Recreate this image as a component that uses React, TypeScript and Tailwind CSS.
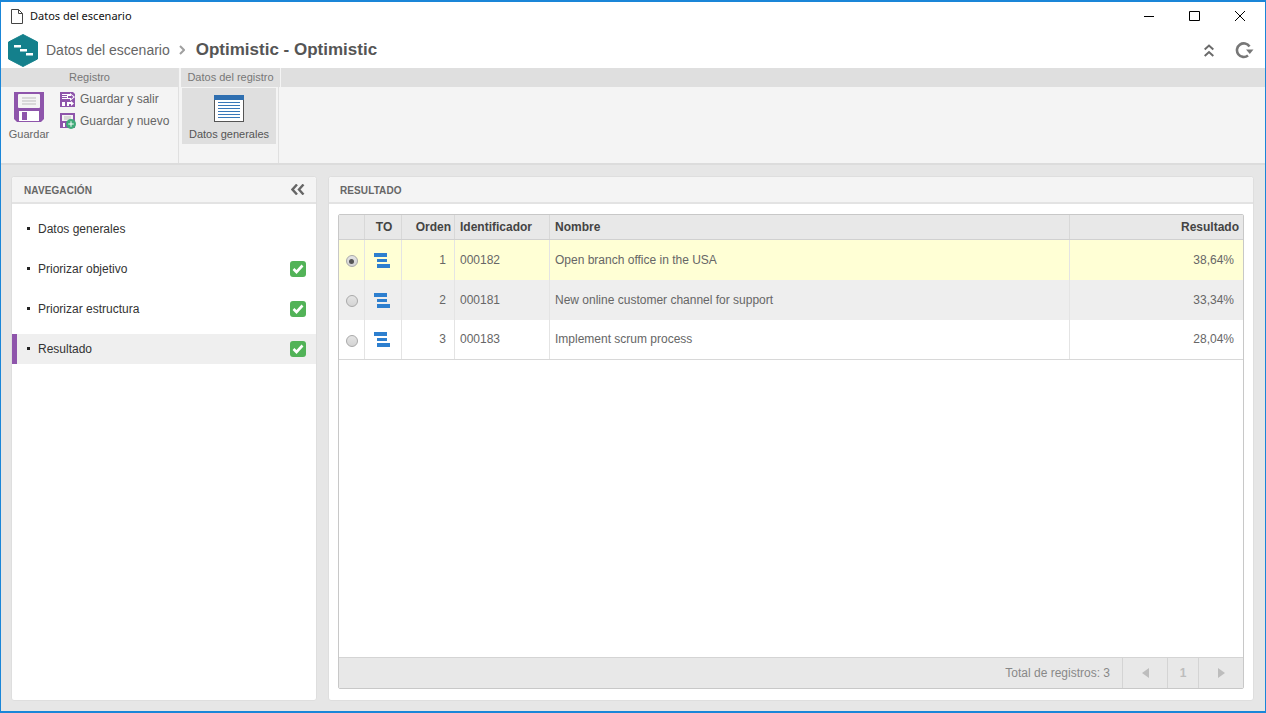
import { Plus } from "lucide-react";

const font = "font-['Liberation_Sans',sans-serif]";

const navItems = [
  { label: "Datos generales", done: false, active: false },
  { label: "Priorizar objetivo", done: true, active: false },
  { label: "Priorizar estructura", done: true, active: false },
  { label: "Resultado", done: true, active: true },
];

const rows = [
  { order: 1, id: "000182", name: "Open branch office in the USA", result: "38,64%", bg: "bg-[#ffffd5]", h: "h-[40px]", selected: true },
  { order: 2, id: "000181", name: "New online customer channel for support", result: "33,34%", bg: "bg-[#eeeeee]", h: "h-[40px]", selected: false },
  { order: 3, id: "000183", name: "Implement scrum process", result: "28,04%", bg: "bg-white", h: "h-[39px]", selected: false },
];

function Floppy({ size }: { size: number }) {
  return (
    <svg width={size} height={size} viewBox="0 0 30 30">
      <path d="M0 0h30v27l-3 3H3l-3-3z" fill="#8e55ab" />
      <rect x="4" y="2" width="22" height="14" rx="1" fill="#f4f4f4" />
      <path d="M8 6h14M8 9h14M8 12h14" stroke="#bdbdbd" strokeWidth="1" />
      <rect x="5" y="19" width="20" height="10" fill="#fff" />
      <rect x="8" y="20" width="5" height="8" fill="#8e55ab" />
    </svg>
  );
}

function SaveExit() {
  return (
    <svg width="15" height="15" viewBox="0 0 15 15">
      <path d="M0 0h13l2 2v13H0z" fill="#8e55ab" />
      <path d="M2 2h8v1H2zM2 4h6v1H2zM2 6h5v1H2z" fill="#fff" />
      <path d="M7 3h3V1l5 4-5 4V7H7z" fill="#fff" />
      <path d="M8 4h3V3l2.500 2-2.500 2V6H8z" fill="#8e55ab" />
      <path d="M2 10h3v4H2zM7 10h4v-1l3 2.500-3 2.500v-2H9v2H7z" fill="#fff" />
    </svg>
  );
}

function SaveNew() {
  return (
    <div className="relative w-[16px] h-[16px]">
      <svg width="15" height="15" viewBox="0 0 15 15">
        <path d="M0 0h15v15H0z" fill="#8e55ab" />
        <path d="M2 2h11v6H2z" fill="#f4f4f4" />
        <path d="M4 4h7M4 6h7" stroke="#bbb" strokeWidth="1" />
        <path d="M3 10h2v4H3z" fill="#fff" />
      </svg>
      <span className="absolute left-[6px] top-[6px] w-[10px] h-[10px] rounded-full bg-[#3faa78] flex items-center justify-center">
        <Plus size={8} strokeWidth={3} className="text-white" />
      </span>
    </div>
  );
}

function TreeIcon() {
  return (
    <div className="flex flex-col gap-[2px] w-[16px] -ml-[2px]">
      <div className="h-[4px] w-[13px] bg-[#2d7fcf]" />
      <div className="h-[3px] w-[10px] ml-[3px] bg-[#2d7fcf]" />
      <div className="h-[4px] w-[13px] ml-[3px] bg-[#2d7fcf]" />
    </div>
  );
}

function Radio({ on }: { on: boolean }) {
  return (
    <span className="w-[12px] h-[12px] rounded-full border border-[#a9a9a9] bg-gradient-to-b from-[#e4e4e4] to-[#d4d4d4] flex items-center justify-center">
      {on && <span className="w-[5px] h-[5px] rounded-full bg-[#555555]" />}
    </span>
  );
}

function Check() {
  return (
    <span className="ml-auto w-[16px] h-[16px] rounded-[3px] bg-[#52b358] flex items-center justify-center">
      <svg width="12" height="10" viewBox="0 0 12 10">
        <path d="M1.500 5l3 3 6-6.500" fill="none" stroke="#fff" strokeWidth="2.600" />
      </svg>
    </span>
  );
}

function PanelHeader({ title, pad, children }: { title: string; pad: string; children?: React.ReactNode }) {
  return (
    <div className={`h-[27px] shrink-0 bg-[#f4f4f4] border-b-2 border-[#e3e3e3] flex items-center justify-between ${pad} pr-[12px] pt-[2px] rounded-t-[3px]`}>
      <span className="text-[10px] font-bold text-[#666666] tracking-[0.1px]">{title}</span>
      {children}
    </div>
  );
}

export default function App() {
  return (
    <div className={`${font} w-[1266px] h-[713px] overflow-hidden flex flex-col bg-[#e6e6e6] border border-t-2 border-b-2 border-[#1a86d8] text-[12px]`}>
      {/* Title bar */}
      <div className="h-[28px] shrink-0 bg-white flex items-center pl-[10px]">
        <svg width="12" height="15" viewBox="0 0 12 15" fill="none" stroke="#444" strokeWidth="1">
          <path d="M.5.5h7l4 4v10H.5zM7.500.5v4h4" />
        </svg>
        <span className="ml-[7px] text-[11px] text-[#111111] font-['Noto_Sans','Liberation_Sans',sans-serif]">Datos del escenario</span>
        <svg className="ml-auto mr-[2px]" width="103" height="12" viewBox="0 0 103 12" fill="none" stroke="#000" strokeWidth="1">
          <path d="M0 6.500h10M45.500 1.500h10v9h-10zM91 1l10 10M101 1 91 11" />
        </svg>
        <div className="w-[16px]" />
      </div>

      {/* Header */}
      <div className="h-[38px] shrink-0 bg-white flex items-center pl-[7px] pr-[11px] pt-[2px]">
        <svg width="30" height="33" viewBox="0 0 30 33">
          <path d="M15 0.500 29.500 8v17L15 32.500.5 25V8z" fill="#14808c" stroke="#14808c" strokeLinejoin="round" />
          <path d="M6 11h7v2.500H6zM12 15h7v2.500h-7zM18 19h7v2.500h-7z" fill="#fff" />
        </svg>
        <span className="ml-[8px] text-[14px] text-[#666666]">Datos del escenario</span>
        <svg className="ml-[9px]" width="6" height="10" viewBox="0 0 6 10" fill="none" stroke="#a0a0a0" strokeWidth="2">
          <path d="M1 1l4 4-4 4" />
        </svg>
        <span className="ml-[11px] text-[17px] font-bold text-[#555555]">Optimistic - Optimistic</span>
        <svg className="ml-auto" width="10" height="13" viewBox="0 0 10 13" fill="none" stroke="#6a6a6a" strokeWidth="2">
          <path d="M.7 5.500 5 1.500l4.300 4M.7 12 5 8l4.300 4" />
        </svg>
        <svg className="ml-[20px]" width="20" height="17" viewBox="0 0 20 17" fill="none">
          <path d="M15.500 4.500A6.800 6.800 0 1 0 14 13.500" stroke="#777777" strokeWidth="2.600" />
          <path d="M12 7.500h7.500L15.800 12z" fill="#777777" />
        </svg>
      </div>

      {/* Ribbon */}
      <div className="h-[97px] shrink-0 flex bg-[#f4f4f4] border-b-2 border-[#dcdcdc]">
        <div className="w-[178px] flex flex-col border-r border-[#e0e0e0]">
          <div className="h-[19px] bg-[#dfdfdf] text-[11px] text-[#777777] flex items-center justify-center">Registro</div>
          <div className="flex pt-[5px] pl-[5px]">
            <div className="w-[46px] flex flex-col items-center text-[11px] text-[#666666]">
              <Floppy size={30} />
              <span className="mt-[4px]">Guardar</span>
            </div>
            <div className="flex flex-col gap-[6px] ml-[8px] -mt-[1px] text-[12px] text-[#666666]">
              <div className="flex items-center gap-[5px] h-[16px]"><SaveExit /><span>Guardar y salir</span></div>
              <div className="flex items-center gap-[4px] h-[16px]"><SaveNew /><span>Guardar y nuevo</span></div>
            </div>
          </div>
        </div>
        <div className="w-[100px] flex flex-col border-r border-[#e0e0e0] pl-[2px]">
          <div className="h-[19px] w-[99px] bg-[#dfdfdf] text-[11px] text-[#777777] flex items-center justify-center whitespace-nowrap">Datos del registro</div>
          <div className="mt-[1px] ml-[1px] w-[94px] h-[56px] bg-[#dfdfdf] flex flex-col items-center pt-[7px]">
            <div className="w-[30px] h-[27px] bg-white border border-[#555555] border-t-0 flex flex-col">
              <div className="h-[5px] bg-[#2f6fb0] -mx-px" />
              <div className="flex-1 flex flex-col justify-evenly px-[3px] pb-[1px]">
                <div className="h-px bg-[#3a78b8]" />
                <div className="h-px bg-[#3a78b8]" />
                <div className="h-px bg-[#3a78b8]" />
                <div className="h-px bg-[#3a78b8]" />
                <div className="h-px bg-[#3a78b8]" />
                <div className="h-px bg-[#3a78b8]" />
              </div>
            </div>
            <span className="mt-[4px] text-[11px] text-[#555555]">Datos generales</span>
          </div>
        </div>
        <div className="flex-1">
          <div className="h-[19px] ml-[2px] bg-[#dfdfdf]" />
        </div>
      </div>

      {/* Content */}
      <div className="flex-1 flex gap-[11px] pt-[11px] pb-[10px] pl-[10px] pr-[11px] min-h-0">
        {/* Navigation */}
        <div className="w-[306px] bg-white rounded-[3px] border border-[#dedede] flex flex-col">
          <PanelHeader title="NAVEGACIÓN" pad="pl-[12px]">
            <svg className="-mr-[1px] -mt-[2px]" width="14" height="11" viewBox="0 0 14 11" fill="none" stroke="#666666" strokeWidth="2.400">
              <path d="M6 .5 1.500 5.500 6 10.500M12.500 .5 8 5.500l4.500 5" />
            </svg>
          </PanelHeader>
          <div className="flex flex-col gap-[10px] pt-[10px]">
            {navItems.map((item) => (
              <div
                key={item.label}
                className={`h-[30px] flex items-center pr-[10px] border-l-[5px] ${item.active ? "bg-[#efefef] border-[#8e55ab]" : "border-transparent"}`}
              >
                <span className="ml-[10px] w-[3px] h-[3px] bg-[#222222] -mt-[2px]" />
                <span className="ml-[8px] text-[12px] text-[#333333]">{item.label}</span>
                {item.done && <Check />}
              </div>
            ))}
          </div>
        </div>

        {/* Result */}
        <div className="flex-1 bg-white rounded-[3px] border border-[#dedede] flex flex-col">
          <PanelHeader title="RESULTADO" pad="pl-[11px]" />
          <div className="flex-1 flex flex-col mt-[10px] mb-[11px] ml-[9px] mr-[9px] border border-[#c8c8c8] rounded-[2px] min-h-0">
            <div className="h-[25px] shrink-0 flex bg-[#e8e8e8] border-b border-[#d0d0d0] text-[12px] font-bold text-[#444444] [&>div]:border-r [&>div]:border-[#d8d8d8]">
              <div className="w-[26px]" />
              <div className="w-[37px] flex items-center justify-center pl-[2px]">TO</div>
              <div className="w-[53px] flex items-center justify-end pr-[3px]">Orden</div>
              <div className="w-[95px] flex items-center pl-[5px]">Identificador</div>
              <div className="w-[520px] flex items-center pl-[5px]">Nombre</div>
              <div className="flex-1 !border-r-0 flex items-center justify-end pr-[4px]">Resultado</div>
            </div>
            {rows.map((row) => (
              <div key={row.id} className={`${row.h} shrink-0 flex ${row.bg} text-[12px] text-[#666666] [&>div]:border-r [&>div]:border-[#e4e4e4]`}>
                <div className="w-[26px] flex items-center justify-center pt-[2px]"><Radio on={row.selected} /></div>
                <div className="w-[37px] flex items-center justify-center"><TreeIcon /></div>
                <div className="w-[53px] flex items-center justify-end pr-[8px] pb-[1px]">{row.order}</div>
                <div className="w-[95px] flex items-center pl-[5px] pb-[1px]">{row.id}</div>
                <div className="w-[520px] flex items-center pl-[5px] pb-[1px]">{row.name}</div>
                <div className="flex-1 !border-r-0 flex items-center justify-end pr-[9px] pb-[1px]">{row.result}</div>
              </div>
            ))}
            <div className="flex-1 border-t border-[#d8d8d8]" />
            <div className="h-[31px] shrink-0 bg-[#e8e8e8] border-t border-[#d4d4d4] flex items-center justify-end text-[12px] text-[#888888]">
              <span className="pr-[12px]">Total de registros: 3</span>
              <div className="w-[45px] h-full border-l border-[#d4d4d4] flex items-center justify-center">
                <span className="w-0 h-0 border-y-[5px] border-y-transparent border-r-[7px] border-r-[#bdbdbd]" />
              </div>
              <div className="w-[31px] h-full border-l border-[#d4d4d4] flex items-center justify-center font-bold text-[#bdbdbd]">1</div>
              <div className="w-[45px] h-full border-l border-[#d4d4d4] flex items-center justify-center">
                <span className="w-0 h-0 border-y-[5px] border-y-transparent border-l-[7px] border-l-[#bdbdbd]" />
              </div>
            </div>
          </div>
        </div>
      </div>
    </div>
  );
}
